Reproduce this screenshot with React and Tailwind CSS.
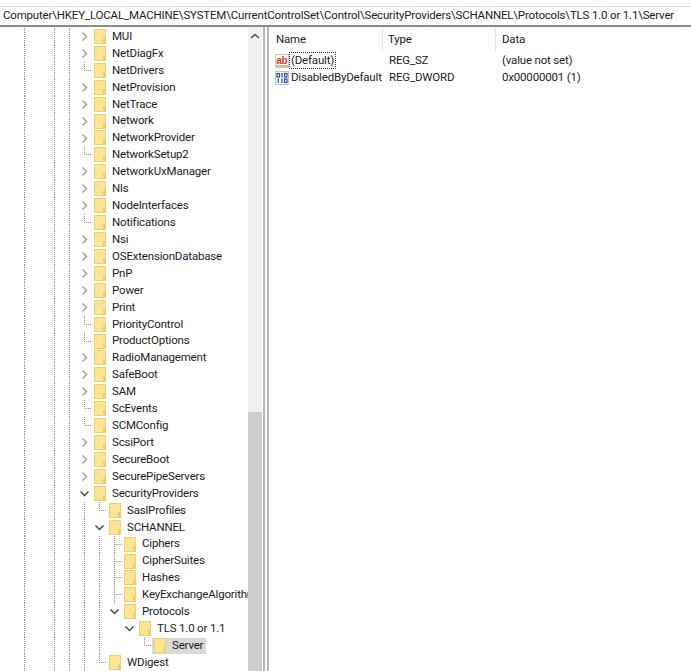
import React from 'react';

// regedit tree: each char in `c` is one 15px guide column after the shared prefix
const TREE = [
  { n: 'MUI', c: '>' }, { n: 'NetDiagFx', c: '>' }, { n: 'NetDrivers', c: 'L' }, { n: 'NetProvision', c: '>' },
  { n: 'NetTrace', c: '>' }, { n: 'Network', c: '>' }, { n: 'NetworkProvider', c: '>' }, { n: 'NetworkSetup2', c: 'L' },
  { n: 'NetworkUxManager', c: '>' }, { n: 'Nls', c: '>' }, { n: 'NodeInterfaces', c: '>' }, { n: 'Notifications', c: 'L' },
  { n: 'Nsi', c: '>' }, { n: 'OSExtensionDatabase', c: '>' }, { n: 'PnP', c: '>' }, { n: 'Power', c: '>' },
  { n: 'Print', c: '>' }, { n: 'PriorityControl', c: 'L' }, { n: 'ProductOptions', c: 'L' }, { n: 'RadioManagement', c: '>' },
  { n: 'SafeBoot', c: '>' }, { n: 'SAM', c: '>' }, { n: 'ScEvents', c: 'L' }, { n: 'SCMConfig', c: 'L' },
  { n: 'ScsiPort', c: '>' }, { n: 'SecureBoot', c: '>' }, { n: 'SecurePipeServers', c: '>' }, { n: 'SecurityProviders', c: 'v' },
  { n: 'SaslProfiles', c: '|L' }, { n: 'SCHANNEL', c: '|v' }, { n: 'Ciphers', c: '||T' }, { n: 'CipherSuites', c: '||T' },
  { n: 'Hashes', c: '||T' }, { n: 'KeyExchangeAlgorithms', c: '||T' }, { n: 'Protocols', c: '||v' }, { n: 'TLS 1.0 or 1.1', c: '|| v' },
  { n: 'Server', c: '||  L', selected: true }, { n: 'WDigest', c: '|L' },
];

const PREFIX = '| ||';
const FONT = 'font-["Roboto","Open_Sans",sans-serif]';

function Guide({ kind }) {
  const line = { stroke: '#8f8f8f', strokeDasharray: '1 1', fill: 'none' };
  return (
    <svg width="15" height="17" viewBox="0 0 15 17" className="shrink-0 block">
      {kind === '|' && <path d="M7.5 0V17" {...line} />}
      {kind === 'L' && <path d="M7.5 0V8.5H15" {...line} />}
      {kind === 'T' && <path d="M7.5 0V17M7.5 8.5H15" {...line} />}
      {kind === '>' && <path d="M5.5 4.5L9.5 8.5L5.5 12.5" fill="none" stroke="#a6a6a6" strokeWidth="1.6" />}
      {kind === 'v' && <path d="M3.5 6.5L7.5 10.5L11.5 6.5" fill="none" stroke="#4d4d4d" strokeWidth="1.5" />}
    </svg>
  );
}

function Folder() {
  return (
    <svg width="12" height="15" viewBox="0 0 12 15" className="shrink-0 block">
      <rect x="0.5" y="0.5" width="11" height="14" fill="#fde595" stroke="#f2d06f" />
      <rect x="9" y="9" width="3" height="6" fill="#f6cf62" />
    </svg>
  );
}

function TreeRow({ row }) {
  const cols = (PREFIX + row.c).split('');
  return (
    <div className="flex h-[16.93px] items-center pl-[17px] whitespace-nowrap">
      {cols.map((k, i) => <Guide key={i} kind={k} />)}
      <div className={`flex h-[16px] items-center pl-[2px] pr-[3px] ${row.selected ? 'bg-[#d9d9d9]' : ''}`}>
        <Folder />
        <span className="ml-[6px]">{row.n}</span>
      </div>
    </div>
  );
}

function StringIcon() {
  return (
    <svg width="14" height="14" viewBox="0 0 14 14" className="shrink-0 block">
      <rect x="0.5" y="0.5" width="13" height="13" fill="#fff" stroke="#cfc4ba" />
      <text x="1.2" y="9.5" fontSize="10" fontWeight="700" fill="#d2401a" fontFamily="Liberation Sans, sans-serif">ab</text>
      <path d="M1 12H13" stroke="#e89a70" strokeWidth="1.5" />
    </svg>
  );
}

function BinaryIcon() {
  return (
    <svg width="14" height="14" viewBox="0 0 14 14" className="shrink-0 block">
      <rect x="0.5" y="0.5" width="13" height="13" fill="#fff" stroke="#b4c4da" />
      <g fill="none" stroke="#1f4f9c" strokeWidth="1.2">
        <rect x="2" y="2.5" width="2.5" height="3.5" />
        <path d="M7 2V6.5" />
        <rect x="9.5" y="2.5" width="2.5" height="3.5" />
        <path d="M3.2 7.5V12" />
        <path d="M7 7.5V12" />
        <rect x="9.5" y="8" width="2.5" height="3.5" />
      </g>
    </svg>
  );
}

function ValueRow({ icon, name, type, data, focused }) {
  return (
    <div className="flex h-[17px] items-center whitespace-nowrap">
      <div className="flex w-[114px] items-center pl-[6px]">
        {icon}
        <span className={`h-[17px] leading-[15px] px-px border border-dotted ${focused ? 'border-[#333]' : 'border-transparent'}`}>{name}</span>
      </div>
      <div className="w-[113px] pl-[6px]">{type}</div>
      <div className="pl-[6px]">{data}</div>
    </div>
  );
}

export default function App() {
  return (
    <div className={`h-[671px] w-[691px] overflow-hidden bg-white text-[11.5px] tracking-[-0.18px] text-[#1c1c1c] ${FONT}`}>
      {/* menu bar, only its lower edge is in the crop */}
      <div className="h-[6px] overflow-hidden">
        <div className="-mt-[14px] flex h-[17px] items-center pl-[3px] whitespace-nowrap">
          <span className="w-[32px]">File</span>
          <span className="w-[33px]">Edit</span>
          <span className="w-[35px]">View</span>
          <span className="w-[57px]">Favorites</span>
          <span>Help</span>
        </div>
      </div>

      {/* address bar */}
      <div className="flex h-[21px] items-center border-t border-[#dcdcdc] border-b-2 border-b-[#8c8c8c] pl-[3px] whitespace-nowrap">
        Computer\HKEY_LOCAL_MACHINE\SYSTEM\CurrentControlSet\Control\SecurityProviders\SCHANNEL\Protocols\TLS 1.0 or 1.1\Server
      </div>

      <div className="flex h-[644px]">
        <div className="w-[248px] shrink-0 overflow-hidden pt-px">
          {TREE.map((row) => <TreeRow key={row.n} row={row} />)}
        </div>

        {/* scrollbar */}
        <div className="flex w-[14px] shrink-0 flex-col bg-[#f0f0f0]">
          <div className="flex h-[385px] justify-center pt-[6px]">
            <svg width="10" height="6" viewBox="0 0 10 6" className="block">
              <path d="M1 5L5 1.5L9 5" fill="none" stroke="#505050" strokeWidth="1.6" />
            </svg>
          </div>
          <div className="flex-1 bg-[#cdcdcd]" />
        </div>

        {/* splitter */}
        <div className="ml-px h-full w-[6px] shrink-0 border-x-2 border-[#b4b8bd]" />

        {/* value list */}
        <div className="flex-1 overflow-hidden">
          <div className="flex h-[25px] items-center whitespace-nowrap">
            <div className="flex h-full w-[114px] items-center border-r border-[#e5e5e5] pl-[7px]">Name</div>
            <div className="flex h-full w-[113px] items-center border-r border-[#e5e5e5] pl-[5px]">Type</div>
            <div className="pl-[6px]">Data</div>
          </div>
          <ValueRow icon={<StringIcon />} name="(Default)" type="REG_SZ" data="(value not set)" focused />
          <ValueRow icon={<BinaryIcon />} name="DisabledByDefault" type="REG_DWORD" data="0x00000001 (1)" />
        </div>
      </div>
    </div>
  );
}
